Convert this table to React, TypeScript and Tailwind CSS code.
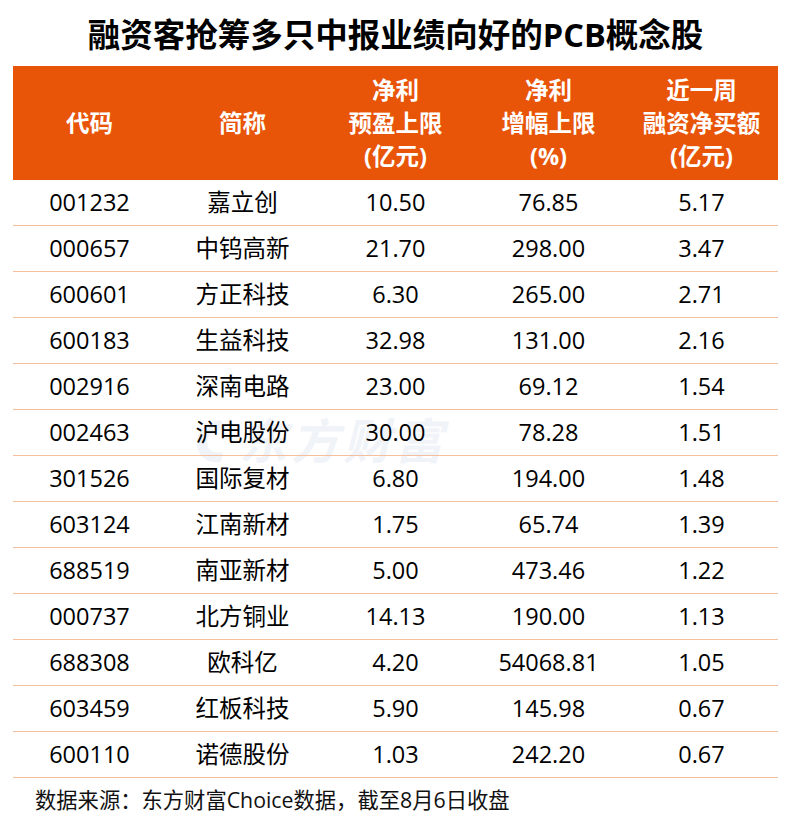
import React from "react";

const rows: [string, string, string, string, string][] = [
  ["001232", "嘉立创", "10.50", "76.85", "5.17"],
  ["000657", "中钨高新", "21.70", "298.00", "3.47"],
  ["600601", "方正科技", "6.30", "265.00", "2.71"],
  ["600183", "生益科技", "32.98", "131.00", "2.16"],
  ["002916", "深南电路", "23.00", "69.12", "1.54"],
  ["002463", "沪电股份", "30.00", "78.28", "1.51"],
  ["301526", "国际复材", "6.80", "194.00", "1.48"],
  ["603124", "江南新材", "1.75", "65.74", "1.39"],
  ["688519", "南亚新材", "5.00", "473.46", "1.22"],
  ["000737", "北方铜业", "14.13", "190.00", "1.13"],
  ["688308", "欧科亿", "4.20", "54068.81", "1.05"],
  ["603459", "红板科技", "5.90", "145.98", "0.67"],
  ["600110", "诺德股份", "1.03", "242.20", "0.67"],
];

const headers: string[][] = [
  ["代码"],
  ["简称"],
  ["净利", "预盈上限", "(亿元)"],
  ["净利", "增幅上限", "(%)"],
  ["近一周", "融资净买额", "(亿元)"],
];

export default function App() {
  return (
    <div
      className="relative w-[791px] h-[833px] bg-white text-black"
      style={{ fontFamily: '"Open Sans", "Noto Sans CJK SC", sans-serif' }}
    >
      <h1 className="h-[66px] flex items-center justify-center pt-[4px] text-[32.5px] font-bold leading-none">
        融资客抢筹多只中报业绩向好的PCB概念股
      </h1>

      <div className="relative mx-[13px]">
        <div
          aria-hidden="true"
          className="absolute left-[178px] top-[350px] flex items-center gap-[4px] text-[#f0f4f8] select-none"
        >
          <svg width="44" height="50" viewBox="0 0 44 50">
            <path
              d="M30 4 C14 6 4 18 6 30 C8 42 18 48 30 46 L32 36 C22 38 16 33 16 27 C16 19 24 13 34 13 Z"
              fill="#f0f4f8"
            />
          </svg>
          <span className="text-[48px] font-bold italic tracking-[4px] leading-none">东方财富</span>
        </div>

        <div className="relative grid grid-cols-5 h-[114px] bg-[#e85408] text-white text-[23.5px] font-bold leading-[33px]">
          {headers.map((h, i) => (
            <div key={i} className="flex flex-col items-center justify-center">
              {h.map((l, j) => (
                <div key={j}>{l}</div>
              ))}
            </div>
          ))}
        </div>

        <div className="relative">
          {rows.map((r, i) => (
            <div
              key={i}
              className="grid grid-cols-5 h-[46px] border-b border-[#f5bf9f] text-[23.5px] leading-none"
            >
              {r.map((c, j) => (
                <div key={j} className="flex items-center justify-center pt-[1px]">
                  {c}
                </div>
              ))}
            </div>
          ))}
        </div>
      </div>

      <div className="pl-[35px] pt-[11px] text-[21.3px] leading-none text-[#111]">
        数据来源：东方财富Choice数据，截至8月6日收盘
      </div>
    </div>
  );
}
